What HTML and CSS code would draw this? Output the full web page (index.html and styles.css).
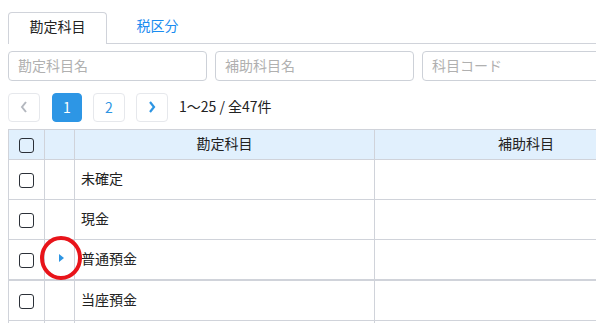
FILE: index.html
```html
<!DOCTYPE html>
<html lang="ja">
<head>
<meta charset="utf-8">
<link rel="stylesheet" href="styles.css">
</head>
<body>
<div class="page">
  <div class="tabs">
    <div class="tab active">勘定科目</div>
    <div class="tab">税区分</div>
    <div class="tab-rest"></div>
  </div>
  <div class="filters">
    <div class="input">勘定科目名</div>
    <div class="input">補助科目名</div>
    <div class="input">科目コード</div>
  </div>
  <div class="pager">
    <div class="pbtn prev"><svg width="10" height="14" viewBox="0 0 10 14"><path d="M7 2 L3 7 L7 12" fill="none" stroke="#b4b8bf" stroke-width="2"/></svg></div>
    <div class="pbtn num current">1</div>
    <div class="pbtn num">2</div>
    <div class="pbtn next"><svg width="10" height="14" viewBox="0 0 10 14"><path d="M3 2 L7 7 L3 12" fill="none" stroke="#2d95e3" stroke-width="2.2"/></svg></div>
    <div class="pinfo">1〜25 / 全47件</div>
  </div>
  <table class="grid">
    <colgroup><col class="c1"><col class="c2"><col class="c3"><col class="c4"></colgroup>
    <thead>
      <tr><th><span class="cb"></span></th><th></th><th class="ht">勘定科目</th><th class="ht last">補助科目</th></tr>
    </thead>
    <tbody>
      <tr><td class="cc"><span class="cb"></span></td><td></td><td class="name">未確定</td><td></td></tr>
      <tr><td class="cc"><span class="cb"></span></td><td></td><td class="name">現金</td><td></td></tr>
      <tr class="expand"><td class="cc"><span class="cb"></span></td><td class="arrow"><span class="tri"></span><svg class="ring" width="46" height="48" viewBox="0 0 46 48"><ellipse cx="23" cy="24" rx="19" ry="20" fill="none" stroke="#e8141a" stroke-width="4"/></svg></td><td class="name">普通預金</td><td></td></tr>
      <tr><td class="cc"><span class="cb"></span></td><td></td><td class="name">当座預金</td><td></td></tr>
      <tr><td class="cc"><span class="cb"></span></td><td></td><td class="name"></td><td></td></tr>
    </tbody>
  </table>
</div>
</body>
</html>
```
FILE: styles.css
```css
html, body {
  margin: 0;
  padding: 0;
  background: #fff;
  overflow: hidden;
}
body {
  font-family: "Noto Sans CJK JP", "Noto Sans", sans-serif;
  font-size: 14px;
  color: #222;
}
.page {
  width: 596px;
  height: 323px;
  overflow: hidden;
  padding: 12px 0 0 8px;
  box-sizing: border-box;
}
.tabs {
  display: flex;
  height: 32px;
  width: 700px;
}
.tab {
  width: 99px;
  box-sizing: border-box;
  height: 32px;
  line-height: 26px;
  text-align: center;
  color: #1a8cf0;
  border-bottom: 1px solid #d0d3da;
}
.tab.active {
  color: #222;
  border: 1px solid #d0d3da;
  border-bottom: none;
  border-radius: 4px 4px 0 0;
}
.tab + .tab { width: 101px; }
.tab-rest {
  flex: 1;
  border-bottom: 1px solid #d0d3da;
}
.filters {
  display: flex;
  gap: 8px;
  margin-top: 7px;
  width: 800px;
}
.input {
  width: 199px;
  height: 30px;
  box-sizing: border-box;
  border: 1px solid #cdd1d8;
  border-radius: 4px;
  padding-left: 9px;
  line-height: 26px;
  color: #b0b0b0;
}
.pager {
  display: flex;
  align-items: center;
  margin-top: 12px;
  height: 29px;
}
.pbtn {
  width: 32px;
  height: 29px;
  box-sizing: border-box;
  border: 1px solid #e6e8ec;
  border-radius: 4px;
  display: flex;
  align-items: center;
  justify-content: center;
  color: #2d95e3;
  margin-right: 11px;
  padding-bottom: 1px;
}
.pbtn.prev { margin-right: 12px; }
.pbtn.current {
  width: 30px;
  background: #2d96e5;
  border-color: #2d96e5;
  color: #fff;
}
.pinfo {
  color: #222;
  line-height: 20px;
  padding-bottom: 4px;
}
.grid {
  margin-top: 7px;
  border-collapse: collapse;
  table-layout: fixed;
  width: 700px;
}
.c1 { width: 36px; }
.c2 { width: 30px; }
.c3 { width: 300px; }
.c4 { width: 334px; }
.grid th, .grid td {
  border: 1px solid #d0d3da;
  padding: 0;
}
.grid th {
  background: #e1f0fd;
  height: 29px;
  font-weight: normal;
  text-align: center;
  color: #222;
}
.grid th.ht { padding-bottom: 3px; height: 26px; }
.grid th.last { text-align: left; padding-left: 123px; }
.grid td { height: 39px; }
.grid td.name { padding: 0 0 4px 6px; height: 35px; }
.grid tr.expand td { border-bottom: 2px solid #d0d3da; }
.grid th:first-child, .grid td.cc { text-align: center; }
.cb {
  display: inline-block;
  width: 15px;
  height: 15px;
  box-sizing: border-box;
  border: 1.5px solid #2b3038;
  border-radius: 3px;
  vertical-align: middle;
  position: relative;
  top: -1px;
}
.arrow {
  position: relative;
}
.tri {
  position: absolute;
  left: 14px;
  top: 14px;
  width: 0;
  height: 0;
  border-left: 5px solid #2d95e3;
  border-top: 4px solid transparent;
  border-bottom: 4px solid transparent;
}
.ring {
  position: absolute;
  left: -7px;
  top: -6px;
}
```
